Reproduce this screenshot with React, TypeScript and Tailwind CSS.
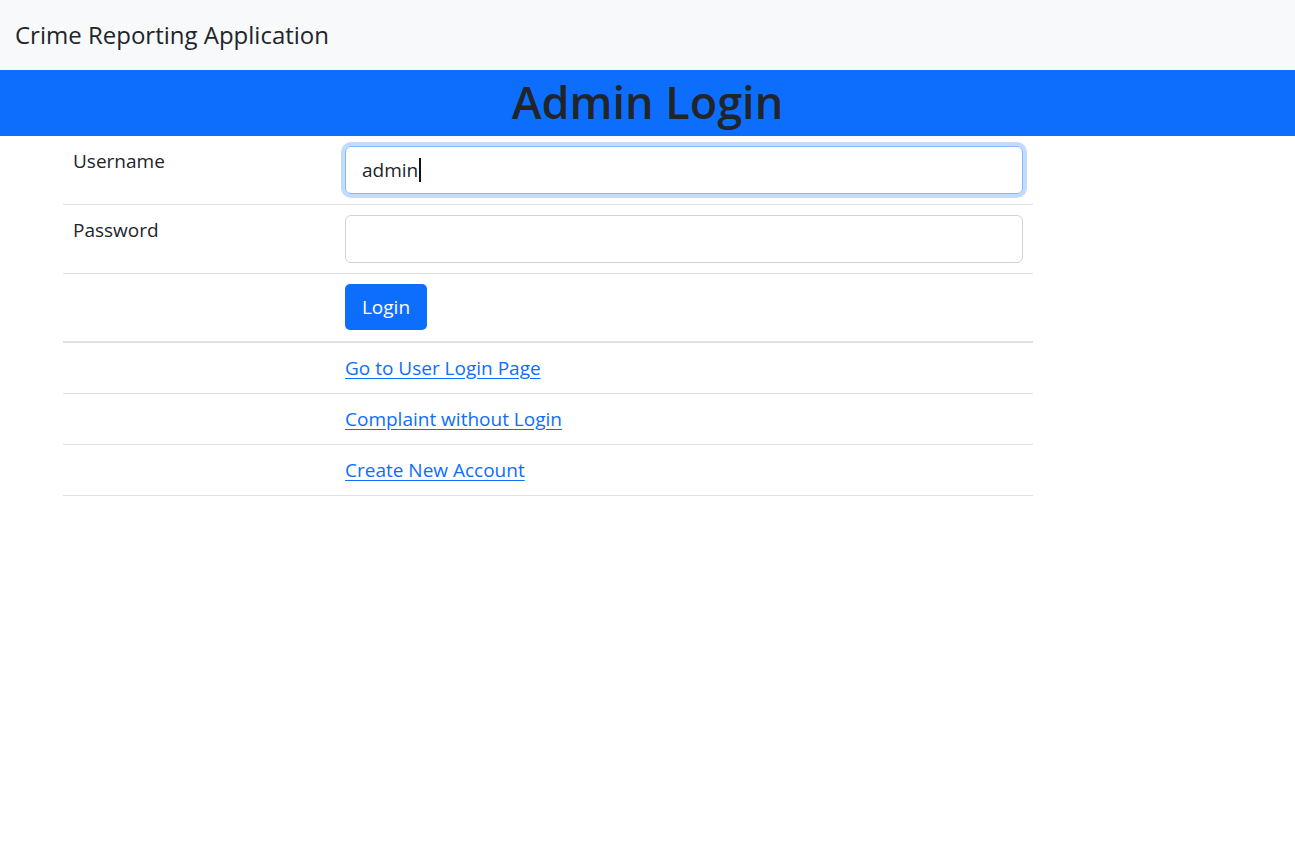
const font = { fontFamily: '"Open Sans", "Noto Sans", sans-serif' };

function LinkRow({ label }: { label: string }) {
  return (
    <div className="flex border-b border-[#dee2e6]">
      <div className="w-[272px] p-[10px]" />
      <div className="flex-1 p-[10px] leading-[30px]">
        <a href="#" className="text-[#0d6efd] underline underline-offset-[3px]">
          {label}
        </a>
      </div>
    </div>
  );
}

export default function App() {
  return (
    <div className="min-h-screen bg-white text-[#212529]" style={font}>
      <nav className="flex h-[70px] items-center bg-[#f8f9fa] px-[15px]">
        <span className="text-[24px] leading-[36px]">Crime Reporting Application</span>
      </nav>

      <div className="flex h-[66px] items-center justify-center bg-[#0d6efd]">
        <h1 className="pb-[3px] text-[45px] font-semibold leading-[56px]">Admin Login</h1>
      </div>

      <div className="ml-[63px] w-[970px] text-[19px]">
        <div className="flex border-b border-[#dee2e6]">
          <div className="w-[272px] p-[10px] leading-[30px]">Username</div>
          <div className="flex-1 p-[10px]">
            <div className="flex h-[48px] items-center rounded-[6px] border border-[#86b7fe] px-[16px] shadow-[0_0_0_4px_rgba(13,110,253,0.25)]">
              <span>admin</span>
              <span className="ml-[1px] inline-block h-[24px] w-[2px] bg-[#111]" />
            </div>
          </div>
        </div>

        <div className="flex border-b border-[#dee2e6]">
          <div className="w-[272px] p-[10px] leading-[30px]">Password</div>
          <div className="flex-1 p-[10px]">
            <div className="h-[48px] rounded-[6px] border border-[#ced4da]" />
          </div>
        </div>

        <div className="flex border-b-2 border-[#dee2e6]">
          <div className="w-[272px] p-[10px]" />
          <div className="flex-1 px-[10px] pb-[11px] pt-[10px]">
            <button className="h-[46px] w-[82px] rounded-[5px] bg-[#0d6efd] leading-[30px] text-white">
              Login
            </button>
          </div>
        </div>

        <LinkRow label="Go to User Login Page" />
        <LinkRow label="Complaint without Login" />
        <LinkRow label="Create New Account" />
      </div>
    </div>
  );
}
